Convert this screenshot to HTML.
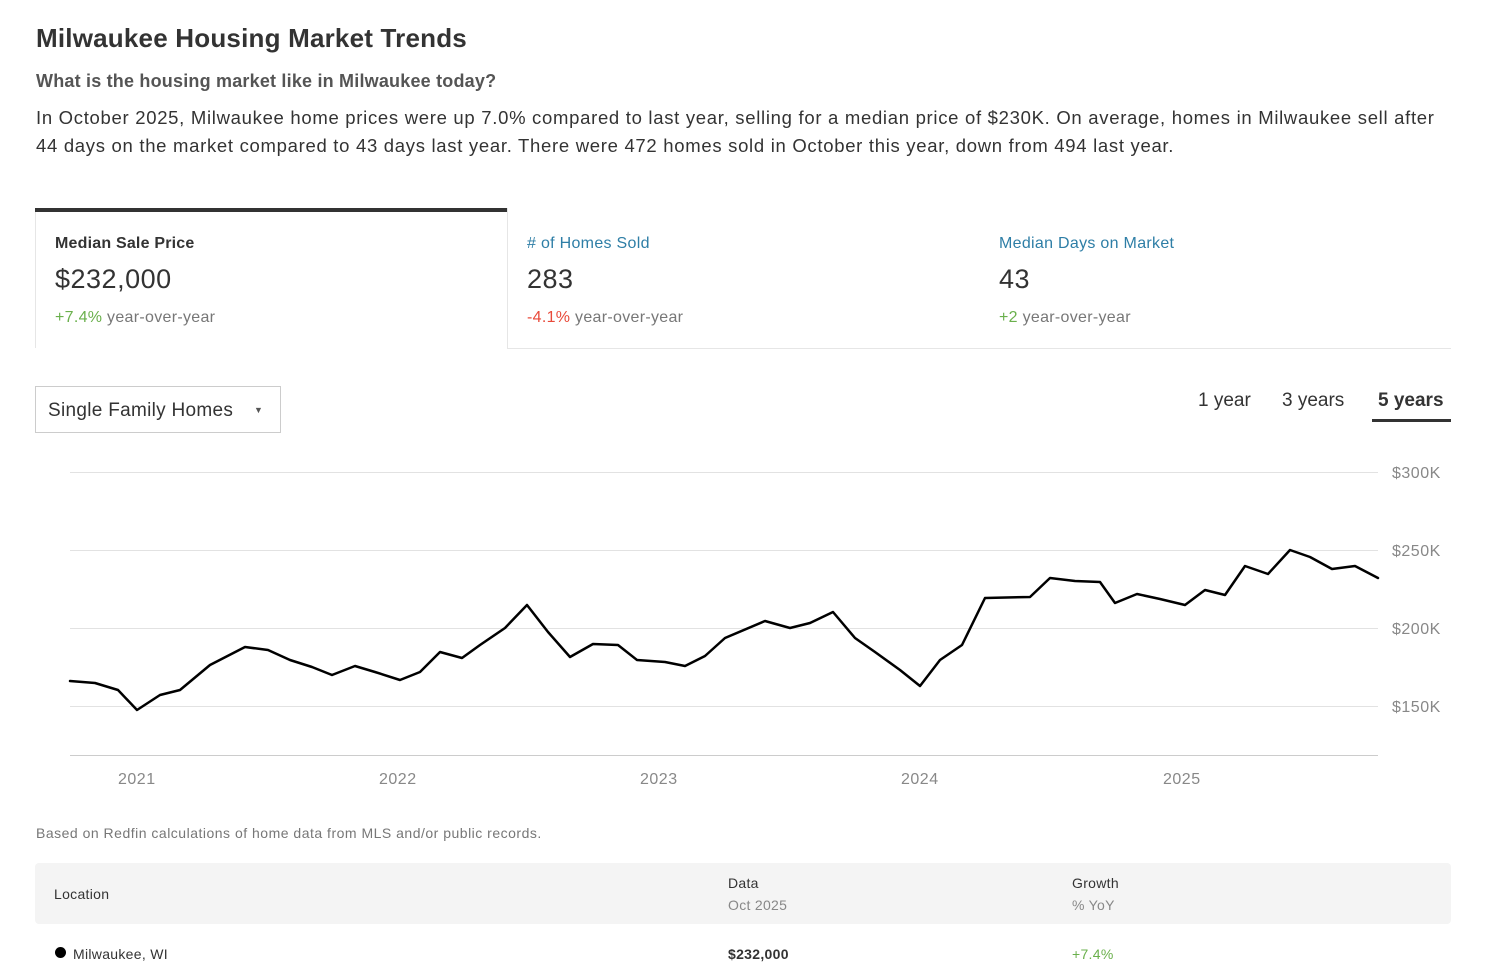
<!DOCTYPE html>
<html><head><meta charset="utf-8"><style>
body{margin:0;background:#fff;font-family:"Liberation Sans",sans-serif;color:#333;width:1488px;height:975px;overflow:hidden;position:relative}
.a{position:absolute;white-space:nowrap}
</style></head><body>
<div class="a" style="left:36px;top:23px;font-size:26px;font-weight:bold;color:#333;letter-spacing:0.2px">Milwaukee Housing Market Trends</div>
<div class="a" style="left:36px;top:71px;font-size:18px;font-weight:bold;color:#555;letter-spacing:0.2px">What is the housing market like in Milwaukee today?</div>
<div class="a" style="left:36px;top:104px;font-size:18.5px;line-height:28px;color:#333;white-space:normal;width:1420px;letter-spacing:0.7px">In October 2025, Milwaukee home prices were up 7.0% compared to last year, selling for a median price of $230K. On average, homes in Milwaukee sell after 44 days on the market compared to 43 days last year. There were 472 homes sold in October this year, down from 494 last year.</div>

<div class="a" style="left:35px;top:208px;width:472px;height:4px;background:#333"></div>
<div class="a" style="left:35px;top:212px;width:1px;height:136px;background:#e6e6e6"></div>
<div class="a" style="left:507px;top:208px;width:944px;height:141px;border-left:1px solid #e6e6e6;border-bottom:1px solid #e6e6e6;box-sizing:border-box"></div>

<div class="a" style="left:55px;top:235px;font-size:16px;font-weight:bold;color:#333;letter-spacing:0.2px">Median Sale Price</div>
<div class="a" style="left:55px;top:264px;font-size:27px;color:#333;letter-spacing:0.5px">$232,000</div>
<div class="a" style="left:55px;top:309px;font-size:16px;color:#777;letter-spacing:0.3px"><span style="color:#6ab04c">+7.4%</span> year-over-year</div>

<div class="a" style="left:527px;top:235px;font-size:16px;color:#2e7ea6;letter-spacing:0.3px">#&nbsp;of Homes Sold</div>
<div class="a" style="left:527px;top:264px;font-size:27px;color:#333;letter-spacing:0.5px">283</div>
<div class="a" style="left:527px;top:309px;font-size:16px;color:#777;letter-spacing:0.3px"><span style="color:#e84a3a">-4.1%</span> year-over-year</div>

<div class="a" style="left:999px;top:235px;font-size:16px;color:#2e7ea6;letter-spacing:0.3px">Median Days on Market</div>
<div class="a" style="left:999px;top:264px;font-size:27px;color:#333;letter-spacing:0.5px">43</div>
<div class="a" style="left:999px;top:309px;font-size:16px;color:#777;letter-spacing:0.3px"><span style="color:#6ab04c">+2</span> year-over-year</div>

<div class="a" style="left:35px;top:386px;width:246px;height:47px;border:1px solid #ccc;box-sizing:border-box"></div>
<div class="a" style="left:48px;top:400px;font-size:19px;color:#333;letter-spacing:0.3px">Single Family Homes</div>
<div class="a" style="left:254px;top:405px;font-size:9px;color:#555">▼</div>

<div class="a" style="left:1198px;top:390px;font-size:19px;color:#333">1 year</div>
<div class="a" style="left:1282px;top:390px;font-size:19px;color:#333">3 years</div>
<div class="a" style="left:1378px;top:390px;font-size:19px;font-weight:bold;color:#333">5 years</div>
<div class="a" style="left:1372px;top:419px;width:79px;height:3px;background:#333"></div>

<svg class="a" style="left:0;top:0" width="1488" height="975">
<g stroke="#e2e2e2" stroke-width="1">
<line x1="70" y1="472.5" x2="1378" y2="472.5"/><line x1="70" y1="550.5" x2="1378" y2="550.5"/>
<line x1="70" y1="628.5" x2="1378" y2="628.5"/><line x1="70" y1="706.5" x2="1378" y2="706.5"/>
<line x1="70" y1="755.5" x2="1378" y2="755.5" stroke="#ccc"/></g>
<g font-family="Liberation Sans" font-size="16" fill="#888" letter-spacing="0.5">
<text x="1392" y="478">$300K</text><text x="1392" y="556">$250K</text><text x="1392" y="634">$200K</text><text x="1392" y="712">$150K</text>
<text x="118" y="784">2021</text><text x="379" y="784">2022</text><text x="640" y="784">2023</text><text x="901" y="784">2024</text><text x="1163" y="784">2025</text></g>
<polyline fill="none" stroke="#000" stroke-width="2.5" stroke-linejoin="round" stroke-linecap="round" points="70,681 95,683 118,690 137,710 160,695 180,690 210,665 245,647 268,650 290,660 312,667 332,675 355,666 375,672 400,680 420,672 440,652 462,658 480,645 505,628 527,605 548,632 570,657 593,644 618,645 637,660 665,662 685,666 705,656 725,638 765,621 790,628 810,623 833,612 855,638 875,652 900,670 920,686 940,660 962,645 985,598 1030,597 1050,578 1075,581 1100,582 1115,603 1137,594 1160,599 1185,605 1205,590 1225,595 1245,566 1268,574 1290,550 1310,557 1332,569 1355,566 1378,578"/>
</svg>

<div class="a" style="left:36px;top:825px;font-size:14px;color:#777;letter-spacing:0.5px">Based on Redfin calculations of home data from MLS and/or public records.</div>
<div class="a" style="left:35px;top:863px;width:1416px;height:61px;background:#f4f4f4;border-radius:4px"></div>
<div class="a" style="left:54px;top:886px;font-size:14px;color:#333;letter-spacing:0.3px">Location</div>
<div class="a" style="left:728px;top:875px;font-size:14px;color:#333;letter-spacing:0.3px">Data</div>
<div class="a" style="left:728px;top:897px;font-size:14px;color:#888;letter-spacing:0.3px">Oct 2025</div>
<div class="a" style="left:1072px;top:875px;font-size:14px;color:#333;letter-spacing:0.3px">Growth</div>
<div class="a" style="left:1072px;top:897px;font-size:14px;color:#888;letter-spacing:0.3px">% YoY</div>
<div class="a" style="left:55px;top:947px;width:11px;height:11px;border-radius:50%;background:#000"></div>
<div class="a" style="left:73px;top:946px;font-size:14px;color:#333;letter-spacing:0.3px">Milwaukee, WI</div>
<div class="a" style="left:728px;top:946px;font-size:14px;font-weight:bold;color:#333;letter-spacing:0.3px">$232,000</div>
<div class="a" style="left:1072px;top:946px;font-size:14px;color:#6ab04c;letter-spacing:0.3px">+7.4%</div>
</body></html>
